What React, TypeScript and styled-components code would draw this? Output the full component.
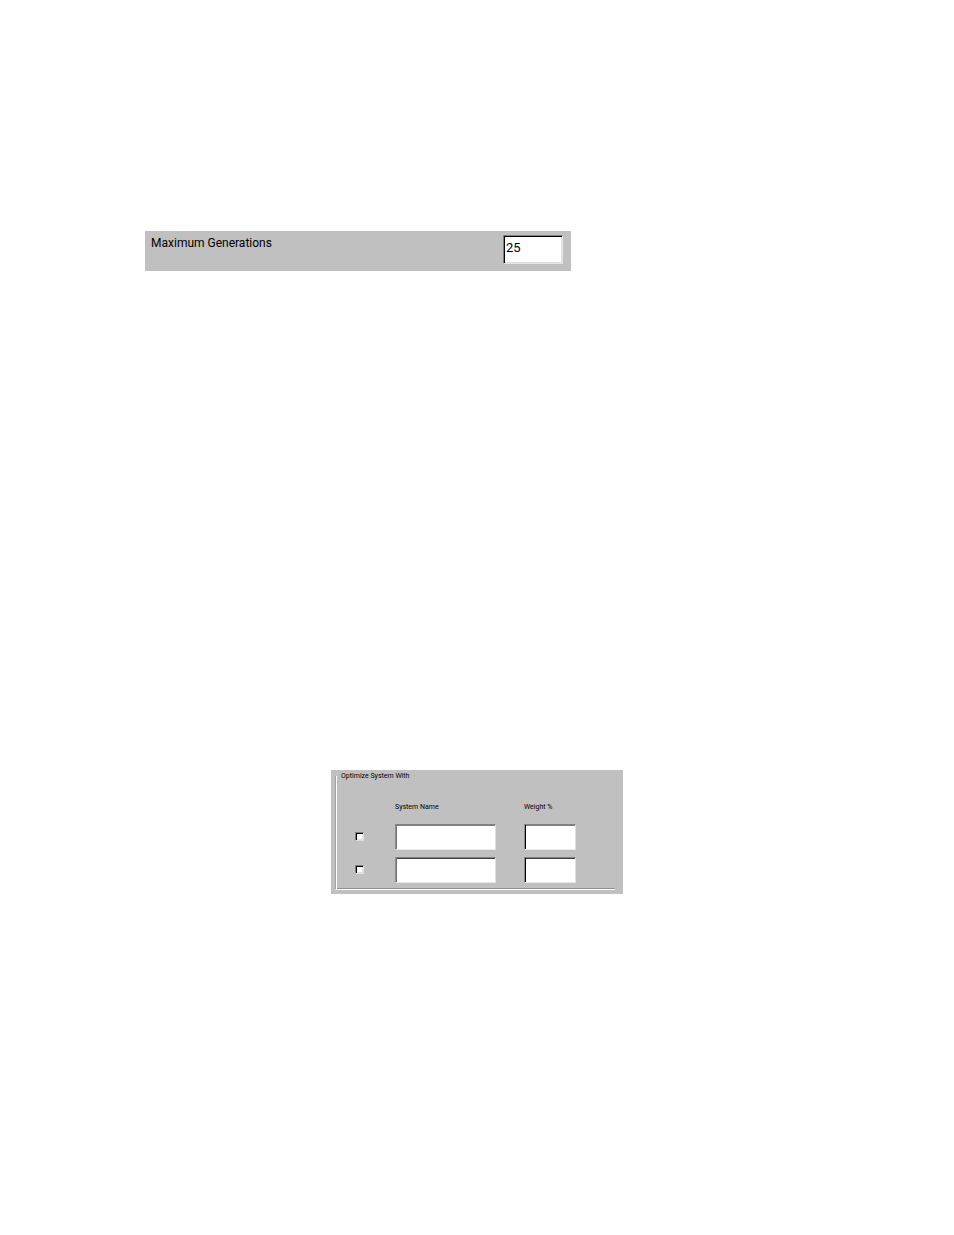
import React from "react";
import styled, { createGlobalStyle } from "styled-components";

const fontStack = 'Roboto, "Liberation Sans", sans-serif';

const GlobalStyle = createGlobalStyle`
  *, *::before, *::after { box-sizing: border-box; }
  body {
    margin: 0;
    background: #fff;
    color: #000;
    font-family: ${fontStack};
  }
`;

const Page = styled.main`
  display: flex;
  flex-direction: column;
  gap: 499px;
  max-width: 664px;
  margin: 0 auto;
  padding: 231px 0;
`;

const GenerationsPanel = styled.section`
  display: flex;
  justify-content: space-between;
  align-items: flex-start;
  width: 100%;
  max-width: 426px;
  padding: 4px 8px 7px 6px;
  background: #c0c0c0;
`;

const GenerationsLabel = styled.label`
  font-size: 12px;
  line-height: 16px;
`;

const GenerationsInput = styled.input`
  width: 60px;
  height: 29px;
  margin: 0;
  padding: 0 0 5px 2px;
  border: 1px solid;
  border-color: #808080 #e6e6e6 #e6e6e6 #808080;
  border-radius: 0;
  outline: 0;
  background: #fff;
  box-shadow: inset 1px 1px 0 #000, inset -1px -1px 0 #dcdcdc;
  font: 13px/16px ${fontStack};
  color: #000;
`;

const OptimizePanel = styled.section`
  align-self: center;
  width: 100%;
  max-width: 292px;
  padding: 1px 8px 4px 4px;
  background: #c0c0c0;
`;

const Group = styled.fieldset`
  min-width: 0;
  margin: 0;
  padding: 21px 0 6px 19px;
  border: 0 solid;
  border-left: 1px solid #a0a0a0;
  border-bottom: 1px solid #fff;
  box-shadow: inset 1px 0 0 #fff, inset 0 -1px 0 #909090;
`;

const GroupTitle = styled.legend`
  margin-left: -14px;
  padding: 0;
  font-size: 7px;
  line-height: 10px;
`;

const SystemRow = styled.div`
  display: grid;
  grid-template-columns: 40px 129px 52px;
  align-items: center;
  & + & { margin-top: 7px; }
`;

const HeaderRow = styled(SystemRow)`
  margin-bottom: 12px;
  & + ${SystemRow} { margin-top: 0; }
`;

const ColumnTitle = styled.span<{ $column: number }>`
  grid-column: ${({ $column }) => $column};
  font-size: 7px;
  line-height: 10px;
`;

const SystemCheck = styled.input`
  appearance: none;
  width: 9px;
  height: 9px;
  margin: 0 0 1px;
  border: 1px solid;
  border-color: #808080 #e0e0e0 #e0e0e0 #808080;
  background: #fff;
  box-shadow: inset 1px 1px 0 #000, inset -1px -1px 0 #e0e0e0;
  &:checked { background: #000; }
`;

const SystemField = styled.input<{ $width: number; $left: string; $top: string }>`
  width: ${({ $width }) => $width}px;
  height: 26px;
  margin: 0;
  padding: 0 3px;
  border: 1px solid;
  border-color: #808080 #e0e0e0 #e8e8e8 #909090;
  border-radius: 0;
  outline: 0;
  background: #fff;
  box-shadow: inset 1px 0 0 ${({ $left }) => $left}, inset 0 1px 0 ${({ $top }) => $top};
  font: 7px/10px ${fontStack};
`;

const systems = [
  { id: 1, top: "#808080" },
  { id: 2, top: "#404040" },
];

export default function App() {
  return (
    <>
      <GlobalStyle />
      <Page>
        <GenerationsPanel>
          <GenerationsLabel htmlFor="generations">Maximum Generations</GenerationsLabel>
          <GenerationsInput id="generations" type="text" defaultValue="25" />
        </GenerationsPanel>
        <OptimizePanel>
          <Group>
            <GroupTitle>Optimize System With</GroupTitle>
            <HeaderRow>
              <ColumnTitle id="system-name" $column={2}>System Name</ColumnTitle>
              <ColumnTitle id="weight" $column={3}>Weight %</ColumnTitle>
            </HeaderRow>
            {systems.map(({ id, top }) => (
              <SystemRow key={id}>
                <SystemCheck type="checkbox" aria-label={`Use system ${id}`} />
                <SystemField type="text" aria-labelledby="system-name" $width={101} $left="#707070" $top={top} />
                <SystemField type="text" aria-labelledby="weight" $width={52} $left="#000" $top={top} />
              </SystemRow>
            ))}
          </Group>
        </OptimizePanel>
      </Page>
    </>
  );
}
